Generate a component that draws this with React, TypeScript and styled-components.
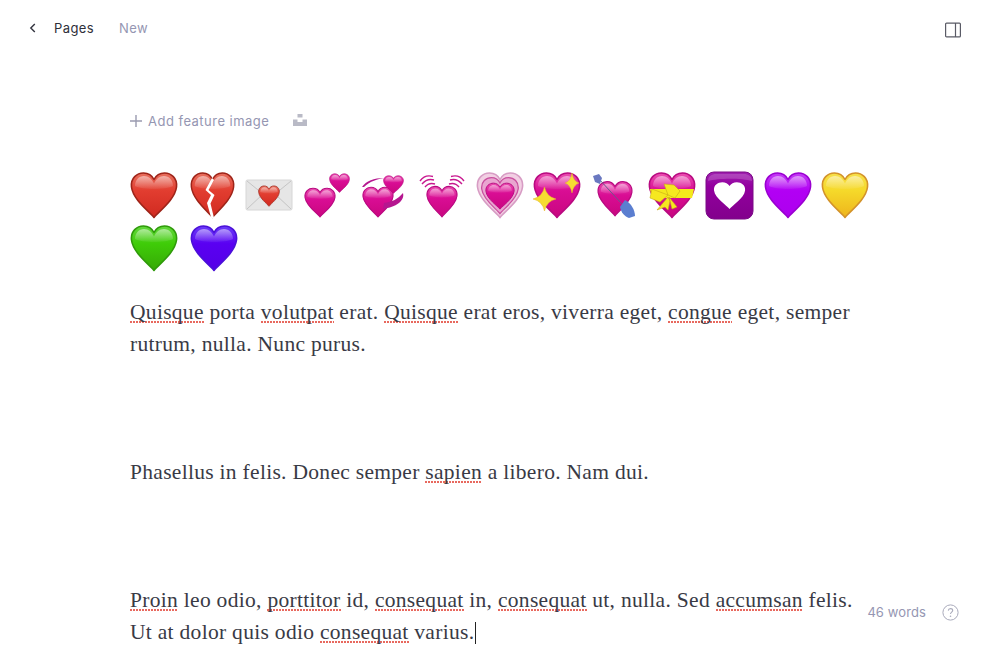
import React from "react";
import styled, { createGlobalStyle } from "styled-components";

const GlobalStyle = createGlobalStyle`
  html, body {
    margin: 0;
    padding: 0;
    background: #fff;
  }
  #root {
    min-height: 100vh;
  }
`;

const HEART =
  "M24 46.5C20 41 3 29 1.5 16C.5 7 7 2 13.5 2C18 2 22 4.5 24 8.5C26 4.5 30 2 34.5 2C41 2 47.5 7 46.5 16C45 29 28 41 24 46.5Z";
const GLOSS =
  "M5 15C5 9 9 5 14 5C18.5 5 22 8 24 12.5C26 8 29.5 5 34 5C39 5 43 9 43 15C36 19 12 19 5 15Z";

type Tone = { light: string; base: string; low: string; edge: string };

const tones: Record<string, Tone> = {
  red: { light: "#e8705f", base: "#e23d30", low: "#d02a20", edge: "#9e2419" },
  pink: { light: "#ea4fb0", base: "#d90d94", low: "#c9067f", edge: "#b80a80" },
  purple: { light: "#c43cf5", base: "#b200f4", low: "#ad00ee", edge: "#9a00d0" },
  yellow: { light: "#f7e04a", base: "#f5d92a", low: "#eeb41c", edge: "#d3922a" },
  green: { light: "#63d83d", base: "#3fcc08", low: "#36a806", edge: "#2f9a0a" },
  blue: { light: "#6a3cf8", base: "#5a00f2", low: "#5400e6", edge: "#4a10d8" },
};

const Gradients = () => (
  <svg width="0" height="0" style={{ position: "absolute" }}>
    <defs>
      {Object.entries(tones).map(([name, t]) => (
        <linearGradient key={name} id={`fill-${name}`} x1="0" y1="0" x2="0" y2="1">
          <stop offset="0" stopColor={t.light} />
          <stop offset="0.4" stopColor={t.base} />
          <stop offset="1" stopColor={t.low} />
        </linearGradient>
      ))}
      <linearGradient id="gloss" x1="0" y1="0" x2="0" y2="1">
        <stop offset="0" stopColor="#fff" stopOpacity="0.5" />
        <stop offset="1" stopColor="#fff" stopOpacity="0.05" />
      </linearGradient>
      <linearGradient id="square" x1="0" y1="0" x2="0" y2="1">
        <stop offset="0" stopColor="#a020b0" />
        <stop offset="0.3" stopColor="#93009f" />
        <stop offset="1" stopColor="#82008c" />
      </linearGradient>
    </defs>
  </svg>
);

// one glossy heart, placed inside the 48 box of its emoji
const Heart = ({ tone, x = 0, y = 0, w = 48, h = 48 }: { tone: string; x?: number; y?: number; w?: number; h?: number }) => (
  <g transform={`translate(${x} ${y}) scale(${w / 48} ${h / 48})`}>
    <path d={HEART} fill={`url(#fill-${tone})`} stroke={tones[tone].edge} strokeWidth="1.6" strokeLinejoin="round" />
    <path d={GLOSS} fill="url(#gloss)" />
  </g>
);

const Star = ({ cx, cy, rx, ry }: { cx: number; cy: number; rx: number; ry: number }) => (
  <path
    d={`M${cx} ${cy - ry}Q${cx + rx * 0.18} ${cy - ry * 0.18} ${cx + rx} ${cy}Q${cx + rx * 0.18} ${cy + ry * 0.18} ${cx} ${cy + ry}Q${cx - rx * 0.18} ${cy + ry * 0.18} ${cx - rx} ${cy}Q${cx - rx * 0.18} ${cy - ry * 0.18} ${cx} ${cy - ry}Z`}
    fill="#f6dc32"
    stroke="#e3b52a"
    strokeWidth="0.5"
  />
);

const EmojiSvg = styled.svg`
  display: block;
  width: 48px;
  height: 48px;
  overflow: visible;
`;

const Emoji = ({ children }: { children: React.ReactNode }) => (
  <EmojiCell>
    <EmojiSvg viewBox="0 0 48 48">{children}</EmojiSvg>
  </EmojiCell>
);

const EmojiBlock = styled.div`
  display: flex;
  flex-wrap: wrap;
  width: 750px;
  margin-top: 40px;
`;

const EmojiCell = styled.div`
  width: 57.6px;
  height: 53px;
`;

const hearts = (
  <>
    <Emoji>
      <Heart tone="red" />
    </Emoji>
    <Emoji>
      <Heart tone="red" x={2} y={0} w={45} h={48} />
      <path d="M24 7L17.5 19L23 24L19 32L23.5 48L26 47L22.5 32.5L26.5 24L20.5 19L26 9Z" fill="#fff" />
    </Emoji>
    <Emoji>
      <rect x="1" y="9" width="46" height="30" rx="1.5" fill="#e6e6e6" stroke="#d6d6d6" />
      <path d="M2 10L24 28L46 10M2 38L18 23M46 38L30 23" fill="none" stroke="#c4c4c4" strokeWidth="1" />
      <Heart tone="red" x={13} y={14} w={22} h={22} />
    </Emoji>
    <Emoji>
      <Heart tone="pink" x={1} y={16} w={32} h={31} />
      <Heart tone="pink" x={26} y={2} w={21} h={20} />
    </Emoji>
    <Emoji>
      <path d="M2 16C6 10 14 7 24 7C18 8 10 10 4 16Z" fill="#b5168f" />
      <Heart tone="pink" x={2} y={15} w={32} h={32} />
      <Heart tone="pink" x={23} y={4} w={21} h={19} />
      <path d="M43 22C45 30 36 36 23 38L24 32C32 31 38 28 43 22Z" fill="#b5168f" />
    </Emoji>
    <Emoji>
      <Heart tone="pink" x={8} y={14} w={32} h={33} />
      <path
        d="M2 10Q7 3 15 5.5M4 13Q9 7 16 9M7 16Q11 11 17 13M46 10Q41 3 33 5.5M44 13Q39 7 32 9M41 16Q37 11 31 13"
        fill="none"
        stroke="#c8188f"
        strokeWidth="1.4"
      />
    </Emoji>
    <Emoji>
      <path d={HEART} fill="#f2cfe3" stroke="#d79cc4" strokeWidth="1.6" />
      <g transform="translate(4.5 5) scale(.81)">
        <path d={HEART} fill="#e9a6d0" stroke="#c9509f" strokeWidth="1.6" />
      </g>
      <Heart tone="pink" x={9} y={11} w={30} h={28} />
    </Emoji>
    <Emoji>
      <Heart tone="pink" />
      <Star cx={11.5} cy={28} rx={11.5} ry={12} />
      <Star cx={39} cy={12} rx={7} ry={10} />
    </Emoji>
    <Emoji>
      <Heart tone="pink" x={6} y={9} w={36} h={37} />
      <path d="M8 8L42 45" stroke="#6a5a8c" strokeWidth="1" />
      <path d="M2 5L8 3L11 7L9 13L4 11Z" fill="#6a78c0" />
      <path d="M29 36L34 29C40 32 44 39 44 45L38 47C33 45 30 41 29 36Z" fill="#5b7ed0" />
    </Emoji>
    <Emoji>
      <Heart tone="pink" />
      <path d="M2 18L46 18L44 27L4 27Z" fill="#f4ea1c" />
      <path
        d="M20 24L4 18L2 27L12 31ZM20 24L16 13L26 14L32 20L27 27ZM20 26L9 39L17 36L20 39L22 30ZM21 26L29 36L24 38Z"
        fill="#f6e820"
        stroke="#c8a818"
        strokeWidth="0.6"
        strokeLinejoin="round"
      />
    </Emoji>
    <Emoji>
      <rect x="0" y="1" width="47" height="47" rx="8" fill="url(#square)" stroke="#7a0a86" strokeWidth="1" />
      <path d="M2 10C2 5 6 3 10 3H38C42 3 46 5 46 10C36 7 12 7 2 10Z" fill="#fff" opacity=".18" />
      <g transform="translate(7 10) scale(.69 .6)">
        <path d={HEART} fill="#fff" />
      </g>
    </Emoji>
    <Emoji>
      <Heart tone="purple" />
    </Emoji>
    <Emoji>
      <Heart tone="yellow" />
    </Emoji>
    <Emoji>
      <Heart tone="green" />
    </Emoji>
    <Emoji>
      <Heart tone="blue" x={2} />
    </Emoji>
  </>
);

const Page = styled.div`
  position: relative;
  width: 1000px;
  height: 660px;
  overflow: hidden;
  background: #fff;
  font-family: Inter, "Liberation Sans", sans-serif;
`;

const TopBar = styled.header`
  display: flex;
  align-items: center;
  height: 20px;
  padding: 18px 39px 0 28px;
`;

const BackIcon = styled.svg`
  width: 10px;
  height: 10px;
  margin-right: 16px;
`;

const Crumb = styled.span<{ $muted?: boolean }>`
  font-size: 13px;
  letter-spacing: 0.4px;
  margin-right: 25px;
  color: ${(p) => (p.$muted ? "#9596b2" : "#2e2f3a")};
`;

const PanelIcon = styled.svg`
  width: 16px;
  height: 16px;
  margin-left: auto;
  margin-top: 4px;
`;

const Editor = styled.main`
  padding: 73px 0 0 130px;
`;

const ImageActions = styled.div`
  display: flex;
  align-items: center;
  height: 20px;
`;

const PlusIcon = styled.svg`
  width: 12px;
  height: 12px;
  margin-right: 6px;
`;

const AddImage = styled.span`
  font-size: 13px;
  letter-spacing: 0.48px;
  color: #9596b2;
`;

const UnsplashIcon = styled.svg`
  width: 14px;
  height: 14px;
  margin-left: 24px;
  margin-top: -2px;
`;

const Body = styled.div`
  margin-top: 19px;
  font-family: "Liberation Serif", Georgia, serif;
  font-size: 21.5px;
  letter-spacing: 0.3px;
  line-height: 32px;
  color: #393a45;
  white-space: nowrap;
`;

const Paragraph = styled.p`
  margin: 0 0 96px;
`;

const Typo = styled.span`
  background-image: linear-gradient(90deg, #e8695f 2px, transparent 2px);
  background-size: 3px 1.5px;
  background-repeat: repeat-x;
  background-position: 0 calc(100% - 2px);
`;

const Caret = styled.span`
  display: inline-block;
  width: 1px;
  height: 22px;
  margin-left: 1px;
  vertical-align: -5px;
  background: #222;
`;

const WordCount = styled.div`
  position: absolute;
  right: 41px;
  bottom: 39px;
  display: flex;
  align-items: center;
  gap: 16px;
  font-size: 13px;
  letter-spacing: 0.1px;
  color: #9596b2;
`;

const CountLabel = styled.span`
  position: relative;
  top: -1px;
`;

const HelpIcon = styled.svg`
  width: 17px;
  height: 17px;
`;

export default function App() {
  return (
    <>
      <GlobalStyle />
      <Gradients />
      <Page>
        <TopBar>
          <BackIcon viewBox="0 0 10 10">
            <path d="M6.8 1L2.8 5L6.8 9" fill="none" stroke="#33343f" strokeWidth="1.4" />
          </BackIcon>
          <Crumb>Pages</Crumb>
          <Crumb $muted>New</Crumb>
          <PanelIcon viewBox="0 0 16 16">
            <rect x=".6" y="1.1" width="14.8" height="13.8" rx="1" fill="none" stroke="#5a5b66" strokeWidth="1.2" />
            <path d="M10.5 1V15" stroke="#5a5b66" strokeWidth="1.2" />
          </PanelIcon>
        </TopBar>
        <Editor>
          <ImageActions>
            <PlusIcon viewBox="0 0 12 12">
              <path d="M6 0V12M0 6H12" stroke="#9a9bb0" strokeWidth="1.4" />
            </PlusIcon>
            <AddImage>Add feature image</AddImage>
            <UnsplashIcon viewBox="0 0 14 14">
              <path d="M4.5 1H9.5V4.5H4.5ZM0 6.5H4.5V9H9.5V6.5H14V13H0Z" fill="#b9bac6" />
            </UnsplashIcon>
          </ImageActions>
          <EmojiBlock>{hearts}</EmojiBlock>
          <Body>
            <Paragraph>
              <Typo>Quisque</Typo> porta <Typo>volutpat</Typo> erat. <Typo>Quisque</Typo> erat eros, viverra eget,{" "}
              <Typo>congue</Typo> eget, semper
              <br />
              rutrum, nulla. Nunc purus.
            </Paragraph>
            <Paragraph>
              Phasellus in felis. Donec semper <Typo>sapien</Typo> a libero. Nam dui.
            </Paragraph>
            <Paragraph>
              <Typo>Proin</Typo> leo odio, <Typo>porttitor</Typo> id, <Typo>consequat</Typo> in, <Typo>consequat</Typo> ut,
              nulla. Sed <Typo>accumsan</Typo> felis.
              <br />
              Ut at dolor quis odio <Typo>consequat</Typo> varius.
              <Caret />
            </Paragraph>
          </Body>
        </Editor>
        <WordCount>
          <CountLabel>46 words</CountLabel>
          <HelpIcon viewBox="0 0 17 17">
            <circle cx="8.5" cy="8.5" r="7.6" fill="none" stroke="#a9aabb" strokeWidth="1" />
            <path d="M6.3 6.6C6.4 5.3 7.3 4.6 8.5 4.6C9.8 4.6 10.7 5.4 10.7 6.5C10.7 8 8.5 8.2 8.5 10" fill="none" stroke="#a9aabb" strokeWidth="1.1" />
            <circle cx="8.5" cy="12.2" r=".8" fill="#a9aabb" />
          </HelpIcon>
        </WordCount>
      </Page>
    </>
  );
}
